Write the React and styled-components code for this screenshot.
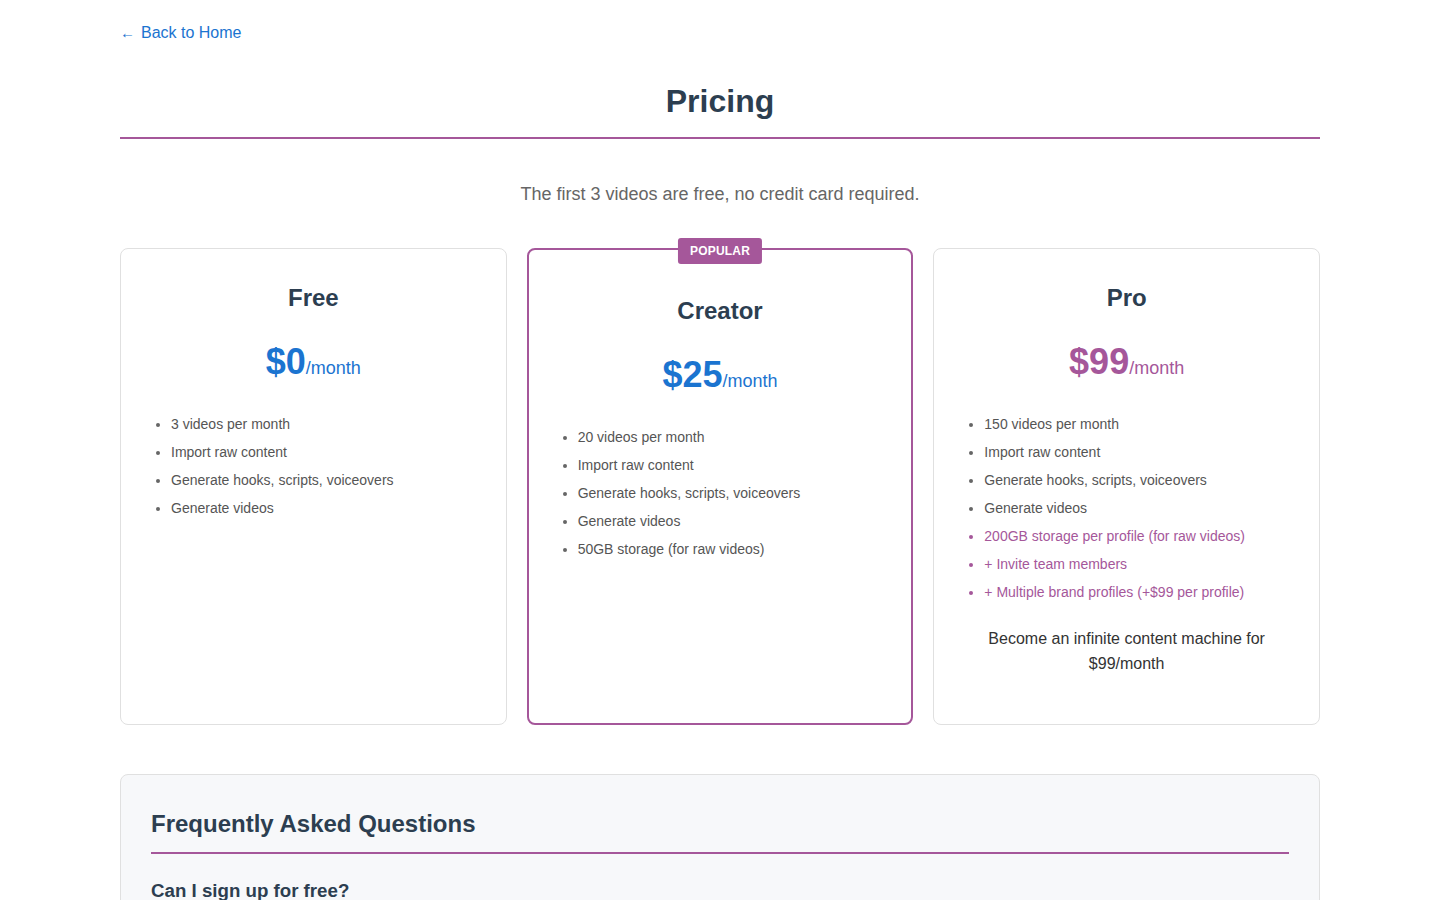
import React from "react";
import styled, { createGlobalStyle } from "styled-components";

const Global = createGlobalStyle`
  * { box-sizing: border-box; }
  body {
    margin: 0;
    background: #ffffff;
    font-family: "Liberation Sans", Arial, sans-serif;
    color: #333;
  }
`;

const PURPLE = "#a5579a";
const BLUE = "#1b74d0";
const DARK = "#2c3e50";

const Page = styled.div`
  max-width: 1200px;
  margin: 0 auto;
  padding: 24px 0 40px;
`;

const BackLink = styled.a`
  display: inline-flex;
  align-items: baseline;
  gap: 6px;
  color: ${BLUE};
  font-size: 16px;
  line-height: 18px;
  text-decoration: none;
`;

const Arrow = styled.span`
  font-size: 15px;
`;

const Header = styled.h1`
  margin: 41px 0 0;
  padding-bottom: 17px;
  border-bottom: 2px solid ${PURPLE};
  text-align: center;
  font-size: 32px;
  line-height: 37px;
  font-weight: 700;
  color: ${DARK};
`;

const Subtitle = styled.p`
  margin: 45px 0 0;
  text-align: center;
  font-size: 18px;
  line-height: 21px;
  color: #666;
`;

const Grid = styled.div`
  margin-top: 43px;
  display: grid;
  grid-template-columns: repeat(3, 1fr);
  gap: 20px;
`;

const Card = styled.div`
  position: relative;
  border: ${(p) => (p.$popular ? `2px solid ${PURPLE}` : "1px solid #e0e0e0")};
  border-radius: 8px;
  padding: ${(p) => (p.$popular ? "47px 29px 48px" : "35px 30px 48px")};
  background: #fff;
  display: flex;
  flex-direction: column;
`;

const Badge = styled.span`
  position: absolute;
  top: -12px;
  left: 50%;
  transform: translateX(-50%);
  background: ${PURPLE};
  color: #fff;
  font-size: 12px;
  font-weight: 700;
  line-height: 14px;
  padding: 6px 12px;
  border-radius: 3px;
  letter-spacing: 0.2px;
`;

const PlanName = styled.h3`
  margin: 0;
  text-align: center;
  font-size: 24px;
  line-height: 28px;
  font-weight: 700;
  color: ${DARK};
`;

const Price = styled.div`
  margin-top: 29px;
  text-align: center;
  color: ${(p) => (p.$accent ? PURPLE : BLUE)};
  line-height: 42px;
`;

const Amount = styled.span`
  font-size: 36px;
  font-weight: 700;
`;

const Period = styled.span`
  font-size: 18px;
`;

const Features = styled.ul`
  margin: 26px 0 0;
  padding-left: 20px;
  list-style: disc;
`;

const Feature = styled.li`
  font-size: 14px;
  line-height: 16px;
  color: ${(p) => (p.$accent ? PURPLE : "#555")};
  margin-bottom: 12px;
  &::marker {
    color: ${(p) => (p.$accent ? PURPLE : "#666")};
  }
`;

const Tagline = styled.p`
  margin: 14px 0 0;
  text-align: center;
  font-size: 16px;
  line-height: 25px;
  color: #333;
`;

const Faq = styled.section`
  margin-top: 49px;
  background: #f7f8fa;
  border: 1px solid #e0e0e0;
  border-radius: 8px;
  padding: 30px;
`;

const FaqTitle = styled.h2`
  margin: 5px 0 0;
  padding-bottom: 14px;
  border-bottom: 2px solid ${PURPLE};
  font-size: 24px;
  line-height: 28px;
  font-weight: 700;
  color: ${DARK};
`;

const Question = styled.h4`
  margin: 26px 0 0;
  font-size: 18.7px;
  line-height: 22px;
  font-weight: 700;
  color: ${DARK};
`;

const Answer = styled.p`
  margin: 10px 0 0;
  font-size: 16px;
  line-height: 24px;
  color: #555;
`;

const base = [
  "Import raw content",
  "Generate hooks, scripts, voiceovers",
  "Generate videos",
];

const plans = [
  {
    name: "Free",
    price: "$0",
    features: [{ t: "3 videos per month" }, ...base.map((t) => ({ t }))],
  },
  {
    name: "Creator",
    price: "$25",
    popular: true,
    features: [
      { t: "20 videos per month" },
      ...base.map((t) => ({ t })),
      { t: "50GB storage (for raw videos)" },
    ],
  },
  {
    name: "Pro",
    price: "$99",
    accent: true,
    features: [
      { t: "150 videos per month" },
      ...base.map((t) => ({ t })),
      { t: "200GB storage per profile (for raw videos)", a: true },
      { t: "+ Invite team members", a: true },
      { t: "+ Multiple brand profiles (+$99 per profile)", a: true },
    ],
    tagline: "Become an infinite content machine for $99/month",
  },
];

export default function App() {
  return (
    <>
      <Global />
      <Page>
        <BackLink href="#">
          <Arrow>←</Arrow>Back to Home
        </BackLink>
        <Header>Pricing</Header>
        <Subtitle>The first 3 videos are free, no credit card required.</Subtitle>
        <Grid>
          {plans.map((p) => (
            <Card key={p.name} $popular={p.popular}>
              {p.popular && <Badge>POPULAR</Badge>}
              <PlanName>{p.name}</PlanName>
              <Price $accent={p.accent}>
                <Amount>{p.price}</Amount>
                <Period>/month</Period>
              </Price>
              <Features>
                {p.features.map((f) => (
                  <Feature key={f.t} $accent={f.a}>
                    {f.t}
                  </Feature>
                ))}
              </Features>
              {p.tagline && <Tagline>{p.tagline}</Tagline>}
            </Card>
          ))}
        </Grid>
        <Faq>
          <FaqTitle>Frequently Asked Questions</FaqTitle>
          <Question>Can I sign up for free?</Question>
          <Answer>
            Yes! Your first 3 videos are completely free, and no credit card is
            required to get started.
          </Answer>
        </Faq>
      </Page>
    </>
  );
}
